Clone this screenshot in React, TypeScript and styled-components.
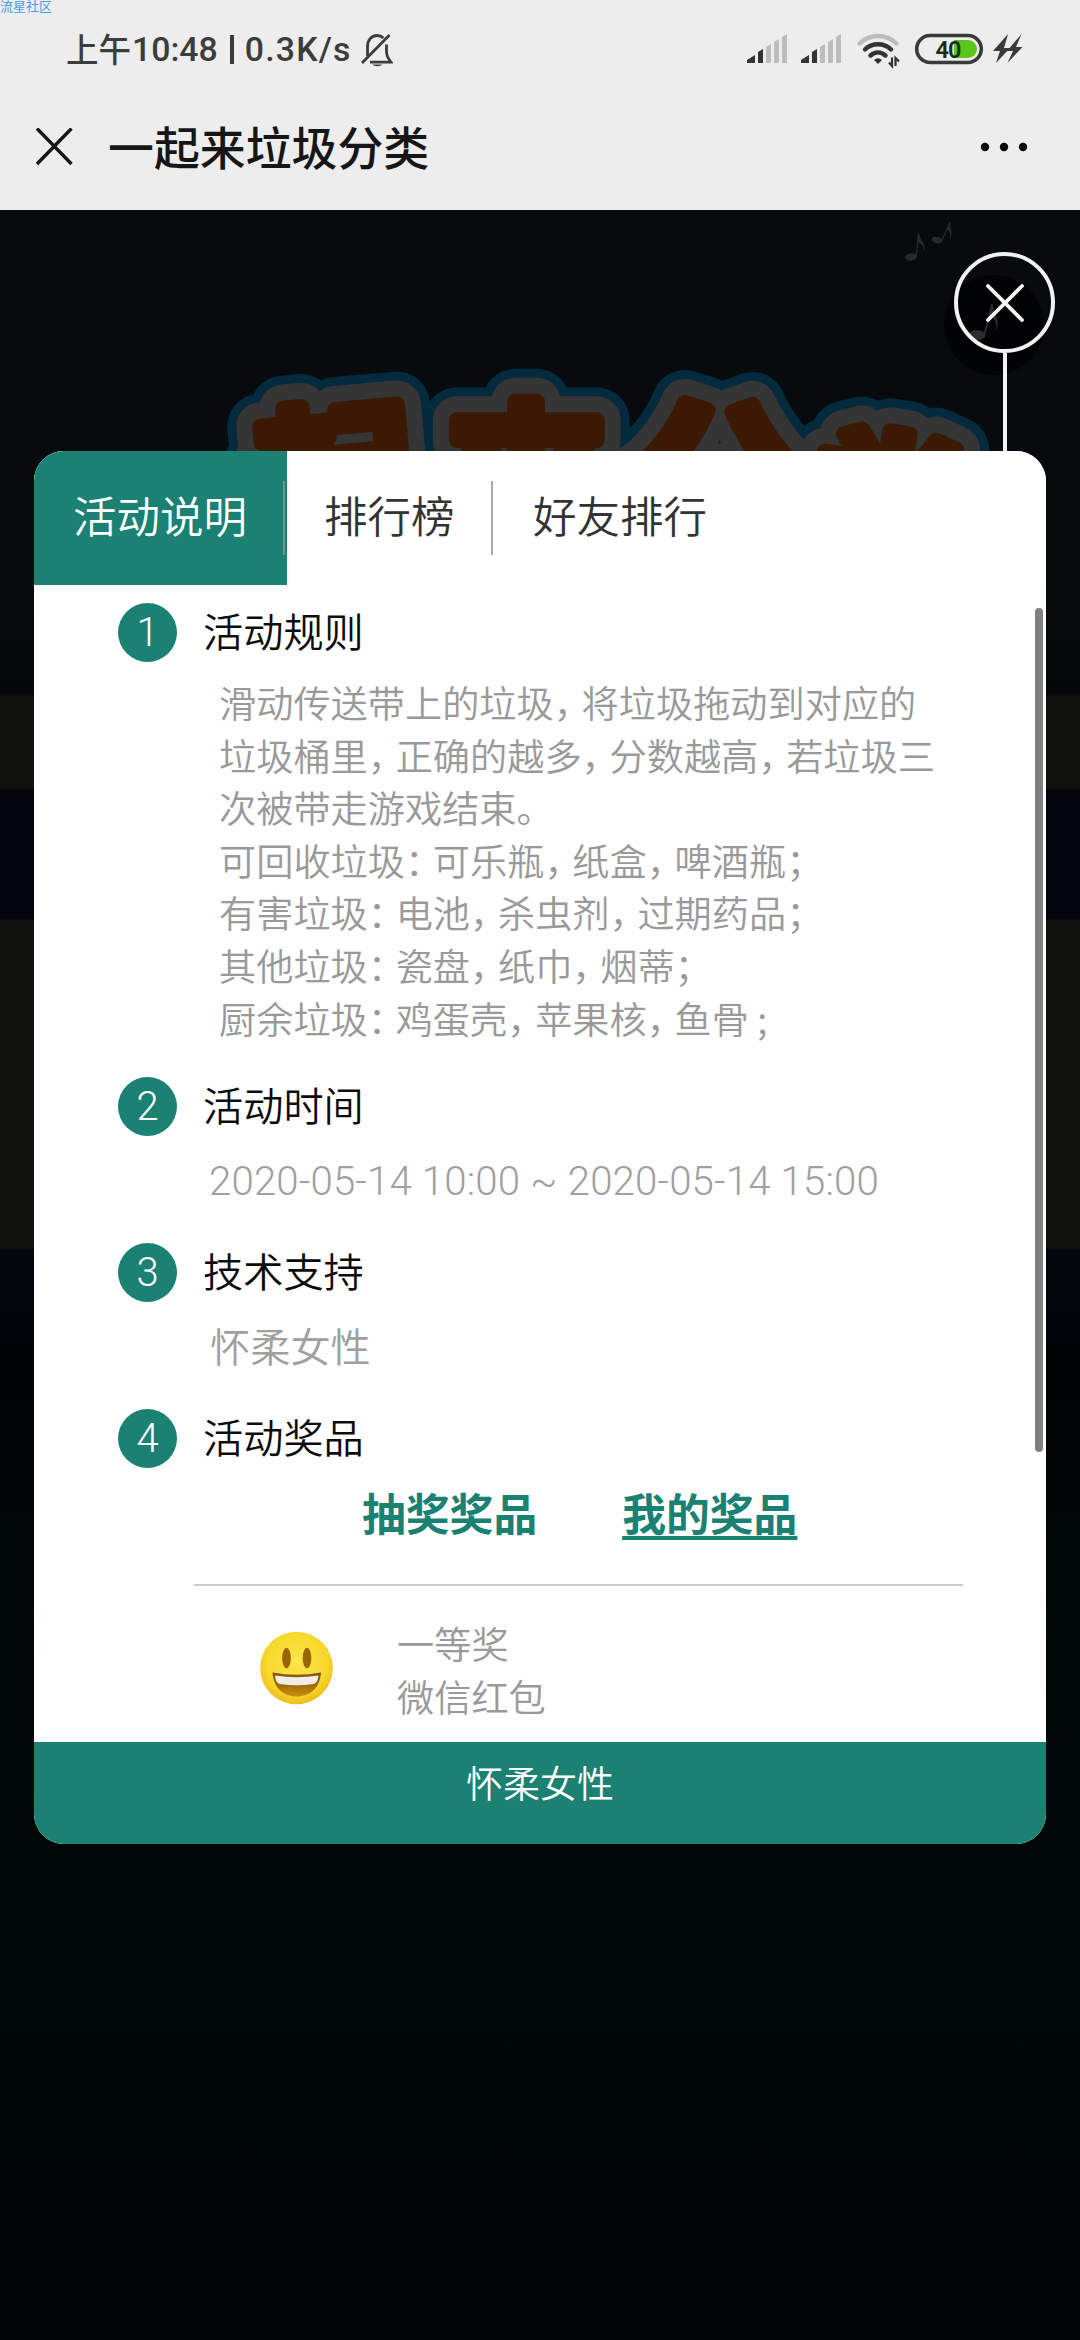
import React from "react";
import styled, { createGlobalStyle } from "styled-components";

const GREEN = "#1a8173";
const CJK = `"Noto Sans CJK SC", sans-serif`;

const GlobalStyle = createGlobalStyle`
  * { box-sizing: border-box; }
  html, body { margin: 0; padding: 0; background: #010506; }
  body { font-family: "Noto Sans CJK SC DemiLight", ${CJK}; }
`;

const Page = styled.div`
  position: relative;
  display: flex;
  flex-direction: column;
  width: 1080px;
  height: 2340px;
  overflow: hidden;
`;

const Watermark = styled.span`
  position: absolute;
  top: -1px;
  left: 0;
  font: 400 13px/14px ${CJK};
  color: #4c9be8;
`;

const Header = styled.header`
  flex: none;
  height: 210px;
  background: #ededed;
`;

const StatusBar = styled.div`
  display: flex;
  align-items: center;
  justify-content: space-between;
  height: 99px;
  padding: 0 57px 0 66px;
`;

const StatusText = styled.div`
  display: flex;
  align-items: center;
  color: #3c3c3c;
  font: 500 33.8px/40px Roboto, ${CJK};
`;

const Meridiem = styled.span`
  margin: 0 1px 4px 0;
  font: 500 32.5px/40px ${CJK};
`;

const Speed = styled.span`
  letter-spacing: 1.2px;
`;

const Separator = styled.i`
  width: 4px;
  height: 29px;
  margin: 0 11px 0 12px;
  background: #3c3c3c;
`;

const StatusIcons = styled.svg`
  display: block;
  width: 280px;
  height: 40px;
`;

const TitleBar = styled.div`
  display: flex;
  align-items: center;
  height: 95px;
  padding: 0 52px 0 35px;
`;

const Title = styled.h1`
  flex: 1;
  margin: 0 0 4px 35px;
  color: #161616;
  font: 500 45.9px/60px ${CJK};
`;

const Icon = styled.svg<{ $w: number; $h: number }>`
  display: block;
  flex: none;
  width: ${(p) => p.$w}px;
  height: ${(p) => p.$h}px;
`;

const BellIcon = styled(Icon)`
  margin-left: 9px;
`;

const Stage = styled.main`
  position: relative;
  flex: 1;
  display: flex;
  flex-direction: column;
  padding: 42px 34px 0;
  background: linear-gradient(
    #070b0e 0, #070b0e 400px, #04080b 485px,
    #10100c 486px, #10100c 579px,
    #02060c 580px, #02060c 709px,
    #10110c 710px, #10110c 1038px,
    #03060b 1039px, #010407 1150px,
    #020708 1400px, #010506 2130px
  );
`;

const Artwork = styled.svg`
  position: absolute;
  top: 0;
  left: 0;
  width: 1080px;
  height: 400px;
`;

const CloseHandle = styled.button`
  position: relative;
  display: flex;
  flex-direction: column;
  align-items: center;
  align-self: flex-end;
  width: 101px;
  height: 199px;
  margin-right: -9px;
  padding: 0;
  border: 0;
  background: none;
`;

const CloseRing = styled.span`
  display: grid;
  place-items: center;
  width: 101px;
  height: 101px;
  border: 4px solid #f2f2f2;
  border-radius: 50%;
`;

const CloseStem = styled.span`
  width: 4px;
  flex: 1;
  background: #f2f2f2;
`;

const Modal = styled.section`
  position: relative;
  display: flex;
  flex-direction: column;
  height: 1393px;
  border-radius: 30px;
  overflow: hidden;
  background: #fefefe;
`;

const Tabs = styled.nav`
  display: flex;
  flex: none;
  height: 134px;
  background: #fff;
`;

const Tab = styled.div<{ $active?: boolean; $width: number; $divided?: boolean; $pad: number }>`
  display: flex;
  width: ${(p) => p.$width}px;
  padding-left: ${(p) => p.$pad}px;
  background: ${(p) => (p.$active ? GREEN : "transparent")};
  color: ${(p) => (p.$active ? "#fff" : "#333")};
  font-size: 43.5px;
  line-height: 127px;
  white-space: nowrap;
  &::after {
    content: "";
    display: ${(p) => (p.$divided ? "block" : "none")};
    width: 2px;
    height: 74px;
    margin: 30px ${(p) => (p.$active ? 2 : 0)}px 0 auto;
    background: ${(p) => (p.$active ? "#76948f" : "#aaa")};
  }
`;

const Body = styled.div`
  display: flex;
  flex: 1;
  min-height: 0;
  padding: 17px 3px 0 84px;
`;

const Content = styled.div`
  flex: 1;
`;

const ScrollThumb = styled.div`
  width: 8px;
  height: 844px;
  margin-top: 6px;
  border-radius: 4px;
  background: #808080;
`;

const SectionHead = styled.div`
  display: flex;
  align-items: center;
  height: 60px;
`;

const Badge = styled.span`
  display: grid;
  place-items: center;
  width: 59px;
  height: 59px;
  margin-right: 26px;
  border-radius: 50%;
  background: ${GREEN};
  color: #fff;
  font: 300 40px/59px Roboto, sans-serif;
`;

const SectionTitle = styled.h2`
  margin: 0 0 5px;
  color: #0c0c0c;
  font-size: 40.2px;
  font-weight: inherit;
  line-height: 60px;
`;

const Rules = styled.div`
  margin: 14px 0 32px 101px;
  color: #999;
  font-size: 37.2px;
  line-height: 52.6px;
  white-space: nowrap;
`;

const Mark = styled.span`
  letter-spacing: -9.3px;
`;

const Note = styled.div<{ $latin?: boolean }>`
  height: 60px;
  margin: 15px 0 31px ${(p) => (p.$latin ? 91 : 92)}px;
  color: #a0a0a0;
  font-size: 40.2px;
  line-height: ${(p) => (p.$latin ? 61 : 56)}px;
  white-space: nowrap;
  ${(p) => p.$latin && `font-family: Roboto, sans-serif; font-weight: 300; letter-spacing: 0.15px;`}
`;

const Links = styled.div`
  display: flex;
  gap: 85px;
  height: 60px;
  margin: 17px 0 0 244px;
  color: ${GREEN};
  font: 700 43.8px/54px ${CJK};
`;

const PrizeLink = styled.a<{ $underlined?: boolean }>`
  text-decoration: ${(p) => (p.$underlined ? "underline" : "none")};
  text-decoration-thickness: 4px;
  text-underline-offset: 5px;
  text-decoration-skip-ink: none;
`;

const Rule = styled.hr`
  width: 769px;
  height: 2px;
  margin: 39px 0 0 76px;
  border: 0;
  background: #ccc;
`;

const Prize = styled.div`
  display: flex;
  align-items: flex-start;
  gap: 64px;
  margin: 31px 0 0 142px;
  color: #999;
  font-size: 37.2px;
  line-height: 52.6px;
`;

const PrizeIcon = styled.div`
  padding-top: 14px;
`;

const Footer = styled.footer`
  flex: none;
  height: 102px;
  background: ${GREEN};
  color: #fff;
  font-size: 37px;
  line-height: 81px;
  text-align: center;
`;

const RULES = [
  "滑动传送带上的垃圾，将垃圾拖动到对应的",
  "垃圾桶里，正确的越多，分数越高，若垃圾三",
  "次被带走游戏结束。",
  "可回收垃圾：可乐瓶，纸盒，啤酒瓶；",
  "有害垃圾：电池，杀虫剂，过期药品；",
  "其他垃圾：瓷盘，纸巾，烟蒂；",
  "厨余垃圾：鸡蛋壳，苹果核，鱼骨 ;",
];

const RuleLine = ({ text }: { text: string }) => (
  <div>
    {text.split(/([，：；])/).map((part, i) =>
      i % 2 ? <Mark key={i}>{part}</Mark> : <React.Fragment key={i}>{part}</React.Fragment>
    )}
  </div>
);

const LETTERS = [
  { ch: "起", x: 336, y: 333, r: -5, s: 164 },
  { ch: "来", x: 526, y: 338, r: 0, s: 172 },
  { ch: "分", x: 716, y: 343, r: 2, s: 178 },
  { ch: "类", x: 888, y: 361, r: 9, s: 164 },
];

const LAYERS = [
  { color: "#032a3d", width: 66 },
  { color: "#353535", width: 48 },
  { color: "#3b1902", width: 16 },
];

const MusicNote = ({ x, y, r, s, c }: { x: number; y: number; r: number; s: number; c: string }) => (
  <g transform={`translate(${x} ${y}) rotate(${r}) scale(${s})`} fill={c}>
    <ellipse cx="0" cy="0" rx="6" ry="3.6" transform="rotate(-12)" />
    <path d="M4.400-1V-24h1.400c.6 6 9 9 6.500 18c0-5-2-8-6.500-9V-1z" />
  </g>
);

const Bars = ({ x }: { x: number }) => (
  <g transform={`translate(${x} 0)`}>
    <path d="M0 33v-3l8-5v8zM11 33V22l5-3v14z" fill="#333" />
    <path d="M19 33V17l5-3v19zM27 33V12l5-3v24zM35 33V7l5-3v29z" fill="#bdbdbd" />
  </g>
);

const Smiley = () => (
  <Icon $w={73} $h={74} viewBox="0 0 73 74">
    <defs>
      <radialGradient id="face" cx=".5" cy=".42" r=".56">
        <stop offset="0" stopColor="#fbe64c" />
        <stop offset=".75" stopColor="#f8d82c" />
        <stop offset="1" stopColor="#efc01f" />
      </radialGradient>
      <linearGradient id="mouth" x1="0" y1="0" x2="0" y2="1">
        <stop offset="0" stopColor="#80530c" />
        <stop offset=".55" stopColor="#a06c08" />
        <stop offset="1" stopColor="#c8930f" />
      </linearGradient>
    </defs>
    <circle cx="36.500" cy="37" r="36.300" fill="url(#face)" />
    <ellipse cx="26.500" cy="27" rx="4.300" ry="10.300" fill="#986507" />
    <ellipse cx="47" cy="27" rx="4.300" ry="10.300" fill="#986507" />
    <path d="M12.500 41.500Q36.500 46 61 41.500C60 57 50 65.500 36.700 65.500S13.500 57 12.500 41.500z" fill="url(#mouth)" />
    <path d="M15 44.500Q36.500 48 58.500 44.500C58 50 56 52.500 53.500 53Q36.500 55.500 20 53C17.500 52.500 15.500 50 15 44.500z" fill="#f1ece8" />
  </Icon>
);

const App = () => (
  <>
    <GlobalStyle />
    <Page>
      <Header>
        <StatusBar>
          <StatusText>
            <Meridiem>上午</Meridiem>
            <span>10:48</span>
            <Separator />
            <Speed>0.3K/s</Speed>
            <BellIcon $w={32} $h={34} viewBox="0 0 32 34" fill="none" stroke="#3c3c3c" strokeWidth="2.800">
              <path d="M1 30L28.500 2M6.500 23V13.500C6.500 7 10.500 2.500 16 2.500c2.600 0 4.800 1 6.500 2.600M25.500 11.500V18c0 5 1.500 7 4.500 11.200H9" />
              <path d="M11.500 31.500h9.500c-1 2-7.500 2.500-9.500 0z" fill="#3c3c3c" stroke="none" />
            </BellIcon>
          </StatusText>
          <StatusIcons viewBox="0 0 280 40">
            <Bars x={4} />
            <Bars x={58} />
            <g transform="translate(-743 -30)" fill="none" strokeWidth="4.400" strokeLinecap="round">
              <path d="M859.500 43.500C870 33.500 886 33.500 896.500 43.500" stroke="#bdbdbd" />
              <path d="M865 49.500C872 42.500 884 42.500 891 49.500" stroke="#333" />
              <path d="M870.500 55.500C875 51.500 881 51.500 885.500 55.500" stroke="#333" />
              <path d="M874 60q4-3.500 8 0l-4 4z" fill="#333" stroke="none" />
              <path d="M892 57.500v8.500l-3-3.500M895.500 66v-8l3.500 3.500" stroke="#333" strokeWidth="2.200" strokeLinecap="butt" />
            </g>
            <g transform="translate(-743 -30)">
              <rect x="916.700" y="35.500" width="64.600" height="27" rx="13.500" fill="none" stroke="#3a3a3a" strokeWidth="3.600" />
              <path d="M954 40h14a9 9 0 0 1 0 18h-14z" fill="#5bc71c" />
              <text x="935.500" y="58" fontFamily="Roboto, sans-serif" fontWeight="600" fontSize="23.500" textLength="26" fill="#1c2d12">40</text>
              <path d="M1008 34L993 51h7l-4 12 14-15h-6zM1021.500 34L1007 51h6l-5.500 12 15-16h-6.500z" fill="#3a3a3a" />
            </g>
          </StatusIcons>
        </StatusBar>
        <TitleBar>
          <Icon $w={38} $h={38} viewBox="0 0 38 38" stroke="#161616" strokeWidth="3.400">
            <path d="M2 .5L36.500 36M36.500 .5L2 36" />
          </Icon>
          <Title>一起来垃圾分类</Title>
          <Icon $w={48} $h={10} viewBox="0 0 48 10" fill="#0a0a0a">
            <circle cx="5" cy="5" r="4.200" />
            <circle cx="24" cy="5" r="4.200" />
            <circle cx="43" cy="5" r="4.200" />
          </Icon>
        </TitleBar>
      </Header>
      <Stage>
        <Artwork viewBox="0 0 1080 400">
          <circle cx="994" cy="115" r="50" fill="#020304" />
          <MusicNote x={911} y={47} r={6} s={1} c="#26292b" />
          <MusicNote x={937} y={30} r={24} s={0.9} c="#26292b" />
          <MusicNote x={977} y={125} r={14} s={1.4} c="#2b2d2e" />
          {LAYERS.map((l) => (
            <g key={l.width} fill={l.color} stroke={l.color} strokeWidth={l.width} strokeLinejoin="round">
              {LETTERS.map((t) => (
                <text
                  key={t.ch}
                  x={t.x}
                  y={t.y}
                  fontSize={t.s}
                  fontFamily="Noto Sans CJK SC, sans-serif"
                  fontWeight="700"
                  textAnchor="middle"
                  transform={`rotate(${t.r} ${t.x} ${t.y - 60})`}
                >
                  {t.ch}
                </text>
              ))}
            </g>
          ))}
        </Artwork>
        <CloseHandle aria-label="关闭">
          <CloseRing>
            <Icon $w={38} $h={38} viewBox="0 0 38 38" stroke="#f5f5f5" strokeWidth="3.800" strokeLinecap="round">
              <path d="M2 2L36 36M36 2L2 36" />
            </Icon>
          </CloseRing>
          <CloseStem />
        </CloseHandle>
        <Modal>
          <Tabs>
            <Tab $active $divided $width={253} $pad={39}>活动说明</Tab>
            <Tab $divided $width={206} $pad={37}>排行榜</Tab>
            <Tab $width={260} $pad={40}>好友排行</Tab>
          </Tabs>
          <Body>
            <Content>
              <SectionHead>
                <Badge>1</Badge>
                <SectionTitle>活动规则</SectionTitle>
              </SectionHead>
              <Rules>
                {RULES.map((t) => (
                  <RuleLine key={t} text={t} />
                ))}
              </Rules>
              <SectionHead>
                <Badge>2</Badge>
                <SectionTitle>活动时间</SectionTitle>
              </SectionHead>
              <Note $latin>2020-05-14 10:00 ~ 2020-05-14 15:00</Note>
              <SectionHead>
                <Badge>3</Badge>
                <SectionTitle>技术支持</SectionTitle>
              </SectionHead>
              <Note>怀柔女性</Note>
              <SectionHead>
                <Badge>4</Badge>
                <SectionTitle>活动奖品</SectionTitle>
              </SectionHead>
              <Links>
                <PrizeLink>抽奖奖品</PrizeLink>
                <PrizeLink $underlined>我的奖品</PrizeLink>
              </Links>
              <Rule />
              <Prize>
                <PrizeIcon>
                  <Smiley />
                </PrizeIcon>
                <div>
                  <div>一等奖</div>
                  <div>微信红包</div>
                </div>
              </Prize>
            </Content>
            <ScrollThumb />
          </Body>
          <Footer>怀柔女性</Footer>
        </Modal>
      </Stage>
      <Watermark>流星社区</Watermark>
    </Page>
  </>
);

export default App;
